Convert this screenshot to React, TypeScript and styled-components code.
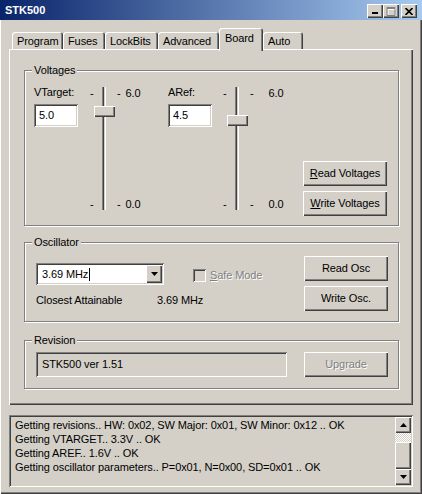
import React from "react";
import styled, { createGlobalStyle, css } from "styled-components";

const face = "#d4d0c8";
const shadow = "#808080";
const dark = "#404040";

const GlobalStyle = createGlobalStyle`
  html, body { margin: 0; padding: 0; background: ${face}; }
  body { font-family: "Liberation Sans", Arial, sans-serif; font-size: 11px; letter-spacing: -0.1px; color: #000; }
  * { box-sizing: border-box; }
`;

const raised = css`
  background: ${face};
  box-shadow: inset 1px 1px 0 #fff, inset -1px -1px 0 ${dark}, inset -2px -2px 0 ${shadow};
`;

const sunken = css`
  box-shadow: inset 1px 1px 0 ${shadow}, inset -1px -1px 0 #fff, inset 2px 2px 0 ${dark},
    inset -2px -2px 0 ${face};
`;

const disabledText = css`
  color: ${shadow};
  text-shadow: 1px 1px 0 #fff;
`;

const Window = styled.div`
  width: 422px;
  height: 494px;
  display: flex;
  flex-direction: column;
  background: ${face};
  overflow: hidden;
`;

const TitleBar = styled.div`
  height: 20px;
  flex: none;
  display: flex;
  align-items: center;
  padding: 0 5px;
  background: linear-gradient(to right, #0a246a, #a6caf0);
  color: #fff;
  font-weight: bold;
  font-size: 11px;
  letter-spacing: 0;
`;

const Title = styled.span`
  flex: 1;
  padding-bottom: 1px;
`;

const CaptionButtons = styled.div`
  display: flex;
  margin-top: 2px;
`;

const CaptionButton = styled.div<{ $gap?: number }>`
  ${raised};
  width: 16px;
  height: 14px;
  margin-left: ${(p) => p.$gap ?? 0}px;
  display: flex;
  align-items: center;
  justify-content: center;
`;

const Frame = styled.div`
  flex: 1;
  display: flex;
  flex-direction: column;
  padding: 8px 9px 0 9px;
  box-shadow: inset 1px 0 0 #fff, inset -1px -1px 0 ${dark}, inset -2px -2px 0 ${shadow};
`;

const TabStrip = styled.div`
  height: 21px;
  display: flex;
  align-items: flex-end;
  padding-left: 3px;
  position: relative;
  z-index: 1;
`;

const Tab = styled.div<{ $w: number; $active?: boolean }>`
  width: ${(p) => p.$w}px;
  height: ${(p) => (p.$active ? 23 : 17)}px;
  margin-bottom: ${(p) => (p.$active ? -2 : 0)}px;
  padding: ${(p) => (p.$active ? "0 0 4px 6px" : "0 0 0 5px")};
  display: flex;
  align-items: center;
  background: ${face};
  border-radius: 3px 3px 0 0;
  box-shadow: inset 1px 1px 0 #fff, inset -1px 0 0 ${dark}, inset -2px 0 0 ${shadow};
  white-space: nowrap;
`;

const Panel = styled.div`
  height: 356px;
  flex: none;
  display: flex;
  flex-direction: column;
  padding: 21px 14px 0 15px;
  box-shadow: inset 1px 1px 0 #fff, inset -1px -1px 0 ${dark}, inset -2px -2px 0 ${shadow};
`;

const Group = styled.div<{ $h: number; $mt?: number }>`
  position: relative;
  height: ${(p) => p.$h}px;
  margin-top: ${(p) => p.$mt ?? 0}px;
  border: 1px solid ${shadow};
  box-shadow: inset 1px 1px 0 #fff, 1px 1px 0 #fff;
`;

const GroupLabel = styled.span`
  position: absolute;
  top: -7px;
  left: 7px;
  padding: 0 2px;
  line-height: 13px;
  background: ${face};
`;

const VoltRow = styled.div`
  display: grid;
  grid-template-columns: 54px 80px 53px 82px 84px;
  padding: 13px 0 0 9px;
`;

const FieldCol = styled.div`
  display: flex;
  flex-direction: column;
`;

const FieldLabel = styled.span`
  margin-top: 2px;
  line-height: 13px;
`;

const TextInput = styled.input`
  ${sunken};
  margin-top: 5px;
  width: 44px;
  height: 23px;
  border: none;
  outline: none;
  background: #fff;
  padding: 0 0 1px 5px;
  font: inherit;
  letter-spacing: inherit;
  color: #000;
`;

const SliderBox = styled.div`
  display: grid;
  grid-template-columns: 14px 4px auto;
  height: 128px;
`;

const TickCol = styled.div<{ $pad: number }>`
  display: flex;
  flex-direction: column;
  justify-content: space-between;
  padding: 3px 0 1px ${(p) => p.$pad}px;
  line-height: 13px;
`;

const TickRow = styled.div<{ $gap: number }>`
  display: flex;
  gap: ${(p) => p.$gap}px;
`;

const Track = styled.div`
  position: relative;
  margin: 3px 0 2px;
  background: linear-gradient(
    to right,
    ${shadow} 0 1px,
    ${dark} 1px 2px,
    ${face} 2px 3px,
    #fff 3px 4px
  );
`;

const Thumb = styled.div`
  ${raised};
  position: absolute;
  left: -8px;
  width: 21px;
  height: 11px;
`;

const ButtonCol = styled.div<{ $pt?: number }>`
  display: flex;
  flex-direction: column;
  gap: 5px;
  padding-top: ${(p) => p.$pt ?? 0}px;
`;

const Button = styled.button<{ $disabled?: boolean }>`
  ${raised};
  width: 84px;
  height: 25px;
  border: none;
  padding: 0 0 1px;
  font: inherit;
  letter-spacing: inherit;
  color: #000;
  ${(p) => p.$disabled && disabledText};
`;

const Key = styled.span`
  text-decoration: underline;
  text-underline-offset: 1px;
`;

const OscRow = styled.div`
  display: flex;
  justify-content: space-between;
  padding: 13px 10px 0 11px;
`;

const OscLeft = styled.div`
  display: flex;
  flex-direction: column;
  padding-top: 7px;
`;

const ComboRow = styled.div`
  display: flex;
  align-items: center;
`;

const Combo = styled.div`
  ${sunken};
  width: 128px;
  height: 22px;
  background: #fff;
  display: flex;
  align-items: center;
  padding: 2px 2px 2px 6px;
`;

const ComboText = styled.span`
  flex: 1;
  display: flex;
  align-items: center;
`;

const Caret = styled.span`
  display: inline-block;
  width: 1px;
  height: 13px;
  margin-left: 1px;
  background: #000;
`;

const DropButton = styled.div`
  ${raised};
  width: 16px;
  height: 18px;
  display: flex;
  align-items: center;
  justify-content: center;
`;

const CheckArea = styled.div`
  display: flex;
  align-items: center;
  margin-left: 29px;
  margin-top: 2px;
`;

const CheckBox = styled.span`
  ${sunken};
  width: 13px;
  height: 13px;
  background: ${face};
`;

const CheckLabel = styled.span`
  ${disabledText};
  margin-left: 4px;
`;

const InfoRow = styled.div`
  display: flex;
  margin-top: 9px;
  line-height: 13px;
`;

const InfoLabel = styled.span`
  width: 121px;
`;

const RevRow = styled.div`
  display: flex;
  justify-content: space-between;
  padding: 11px 10px 0 11px;
`;

const ReadField = styled.div`
  ${sunken};
  width: 251px;
  height: 25px;
  display: flex;
  align-items: center;
  padding: 0 0 2px 6px;
`;

const Log = styled.div`
  ${sunken};
  margin-top: 10px;
  height: 72px;
  flex: none;
  display: flex;
  padding: 2px;
`;

const LogText = styled.div`
  flex: 1;
  padding: 1px 4px;
  line-height: 14px;
  white-space: nowrap;
  overflow: hidden;
`;

const ScrollBar = styled.div`
  width: 16px;
  display: flex;
  flex-direction: column;
`;

const ScrollButton = styled.div`
  ${raised};
  height: 16px;
  flex: none;
  display: flex;
  align-items: center;
  justify-content: center;
`;

const ScrollTrack = styled.div`
  flex: 1;
  background: repeating-conic-gradient(#fff 0 25%, ${face} 0 50%) 0 0 / 2px 2px;
`;

const ScrollThumb = styled.div`
  ${raised};
  height: 27px;
  flex: none;
`;

const Triangle = ({ up }: { up?: boolean }) => (
  <svg width="7" height="4" viewBox="0 0 7 4">
    <path d={up ? "M3.5 0L7 4H0Z" : "M0 0H7L3.5 4Z"} fill="#000" />
  </svg>
);

const Slider = ({ value, labelGap }: { value: number; labelGap: number }) => (
  <SliderBox>
    <TickCol $pad={2}>
      <span>-</span>
      <span>-</span>
    </TickCol>
    <Track>
      <Thumb style={{ top: 1 + (6 - value) * 18 }} />
    </Track>
    <TickCol $pad={11}>
      <TickRow $gap={labelGap}>
        <span>-</span>
        <span>6.0</span>
      </TickRow>
      <TickRow $gap={labelGap}>
        <span>-</span>
        <span>0.0</span>
      </TickRow>
    </TickCol>
  </SliderBox>
);

const tabs: { name: string; w: number; active?: boolean }[] = [
  { name: "Program", w: 51 },
  { name: "Fuses", w: 42 },
  { name: "LockBits", w: 53 },
  { name: "Advanced", w: 61 },
  { name: "Board", w: 44, active: true },
  { name: "Auto", w: 40 },
];

const logLines = [
  "Getting revisions.. HW: 0x02, SW Major: 0x01, SW Minor: 0x12 .. OK",
  "Getting VTARGET.. 3.3V .. OK",
  "Getting AREF.. 1.6V .. OK",
  "Getting oscillator parameters.. P=0x01, N=0x00, SD=0x01 .. OK",
];

export default function App() {
  return (
    <>
      <GlobalStyle />
      <Window>
        <TitleBar>
          <Title>STK500</Title>
          <CaptionButtons>
            <CaptionButton>
              <svg width="8" height="8" viewBox="0 0 8 8">
                <rect x="1" y="5" width="6" height="2" fill="#000" />
              </svg>
            </CaptionButton>
            <CaptionButton>
              <svg width="10" height="10" viewBox="0 0 10 10">
                <path d="M2 2.5h8v8h-8z M2 3.5h8" stroke="#fff" fill="none" />
                <path d="M1 1.5h8v8h-8z M1 2.5h8" stroke={shadow} fill="none" />
              </svg>
            </CaptionButton>
            <CaptionButton $gap={2}>
              <svg width="8" height="7" viewBox="0 0 8 7">
                <path d="M0.5 0L7.5 7M7.5 0L0.5 7" stroke="#000" strokeWidth="1.6" />
              </svg>
            </CaptionButton>
          </CaptionButtons>
        </TitleBar>
        <Frame>
          <TabStrip>
            {tabs.map((t) => (
              <Tab key={t.name} $w={t.w} $active={t.active}>
                {t.name}
              </Tab>
            ))}
          </TabStrip>
          <Panel>
            <Group $h={156}>
              <GroupLabel>Voltages</GroupLabel>
              <VoltRow>
                <FieldCol>
                  <FieldLabel>VTarget:</FieldLabel>
                  <TextInput defaultValue="5.0" />
                </FieldCol>
                <Slider value={5.0} labelGap={5} />
                <FieldCol>
                  <FieldLabel>ARef:</FieldLabel>
                  <TextInput defaultValue="4.5" />
                </FieldCol>
                <Slider value={4.5} labelGap={15} />
                <ButtonCol $pt={77}>
                  <Button>
                    <Key>R</Key>ead Voltages
                  </Button>
                  <Button>
                    <Key>W</Key>rite Voltages
                  </Button>
                </ButtonCol>
              </VoltRow>
            </Group>
            <Group $h={80} $mt={16}>
              <GroupLabel>Oscillator</GroupLabel>
              <OscRow>
                <OscLeft>
                  <ComboRow>
                    <Combo>
                      <ComboText>
                        3.69 MHz
                        <Caret />
                      </ComboText>
                      <DropButton>
                        <Triangle />
                      </DropButton>
                    </Combo>
                    <CheckArea>
                      <CheckBox />
                      <CheckLabel>
                        <Key>S</Key>afe Mode
                      </CheckLabel>
                    </CheckArea>
                  </ComboRow>
                  <InfoRow>
                    <InfoLabel>Closest Attainable</InfoLabel>
                    <span>3.69 MHz</span>
                  </InfoRow>
                </OscLeft>
                <ButtonCol>
                  <Button>Read Osc</Button>
                  <Button>Write Osc.</Button>
                </ButtonCol>
              </OscRow>
            </Group>
            <Group $h={49} $mt={18}>
              <GroupLabel>Revision</GroupLabel>
              <RevRow>
                <ReadField>STK500 ver 1.51</ReadField>
                <Button $disabled>Upgrade</Button>
              </RevRow>
            </Group>
          </Panel>
          <Log>
            <LogText>
              {logLines.map((l) => (
                <div key={l}>{l}</div>
              ))}
            </LogText>
            <ScrollBar>
              <ScrollButton>
                <Triangle up />
              </ScrollButton>
              <ScrollTrack />
              <ScrollThumb />
              <ScrollButton>
                <Triangle />
              </ScrollButton>
            </ScrollBar>
          </Log>
        </Frame>
      </Window>
    </>
  );
}
